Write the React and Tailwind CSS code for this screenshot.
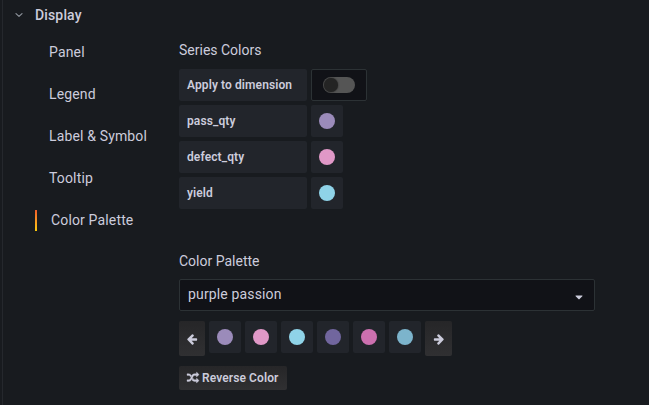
import React from "react";
import { FaCaretDown } from "react-icons/fa";

const navItems = ["Panel", "Legend", "Label & Symbol", "Tooltip", "Color Palette"];

const series = [
  { name: "pass_qty", color: "#9b8bba" },
  { name: "defect_qty", color: "#e098c7" },
  { name: "yield", color: "#8fd3e8" },
];

const palette = ["#9b8bba", "#e098c7", "#8fd3e8", "#71669e", "#cc70af", "#7cb4cc"];

function ArrowIcon({ className }) {
  return (
    <svg viewBox="0 0 1792 1792" fill="currentColor" className={className}>
      <path d="M1664 896v128q0 53-32.5 90.5t-84.5 37.5h-704l293 294q38 36 38 90t-38 90l-75 76q-37 37-90 37-52 0-91-37l-651-652q-37-37-37-90 0-52 37-91l651-650q38-38 91-38 52 0 90 38l75 74q38 38 38 91t-38 91l-293 293h704q52 0 84.5 37.5t32.5 90.5z" />
    </svg>
  );
}

function ShuffleIcon({ className }) {
  return (
    <svg viewBox="0 0 1792 1792" fill="currentColor" stroke="currentColor" strokeWidth="50" className={className}>
      <path d="M666 481q-60 92-137 273-22-45-37-72.5t-40.5-63.5-51-56.5-63-35-81.5-14.5h-224q-14 0-23-9t-9-23v-192q0-14 9-23t23-9h224q250 0 410 225zm1126 799q0 14-9 23l-320 320q-9 9-23 9-13 0-22.5-9.5t-9.5-22.5v-192q-32 0-85 .5t-81 1-73-1-71-5-64-10.5-63-18.5-58-28.5-59-40-55-53.5-56-69.5q59-93 136-273 22 45 37 72.5t40.5 63.5 51 56.5 63 35 81.5 14.5h256v-192q0-14 9-23t23-9q12 0 24 10l319 319q9 9 9 23zm0-896q0 14-9 23l-320 320q-9 9-23 9-13 0-22.5-9.5t-9.5-22.5v-192h-256q-48 0-87 15t-69 45-51 61.5-45 77.5q-32 62-78 171-29 66-49.5 111t-54 105-64 100-74 83-90 68.5-106.5 42-128 16.5h-224q-14 0-23-9t-9-23v-192q0-14 9-23t23-9h224q48 0 87-15t69-45 51-61.5 45-77.5q32-62 78-171 29-66 49.5-111t54-105 64-100 74-83 90-68.5 106.5-42 128-16.5h256v-192q0-14 9-23t23-9q12 0 24 10l319 319q9 9 9 23z" />
    </svg>
  );
}

function Swatch({ color }) {
  return (
    <div className="flex size-8 shrink-0 items-center justify-center rounded-xs bg-[#22252b]">
      <span className="size-4 rounded-full" style={{ backgroundColor: color }} />
    </div>
  );
}

function Label({ children }) {
  return (
    <div className="flex h-8 w-32 items-center rounded-xs bg-[#22252b] px-2 text-xs font-semibold tracking-[0.1px]">
      {children}
    </div>
  );
}

const buttonStyle =
  "flex shrink-0 items-center rounded-xs bg-linear-to-b from-[#262628] to-[#303032]";

export default function App() {
  return (
    <div className="h-[405px] w-[649px] overflow-hidden bg-[#181b1f] pl-0.5 font-['Roboto',sans-serif] text-sm text-[#ccccdc]">
      <div className="h-full border-l border-[#25282d]">
        <header className="flex h-[30px] items-center pl-3 font-medium">
          <svg className="mr-3 size-2" viewBox="0 0 8 8" fill="none" stroke="#8e949c" strokeWidth="1.2" strokeLinecap="round" strokeLinejoin="round">
            <path d="M1 2.6 4 5.4 7 2.6" />
          </svg>
          <h2 className="tracking-[0.15px]">Display</h2>
        </header>
        <div className="flex">
          <nav className="w-44 shrink-0 pt-px pl-8 tracking-[0.15px]">
            {navItems.map((item) => {
              const active = item === "Color Palette";
              return (
                <a key={item} className="flex h-[42px] items-center">
                  <span
                    className={
                      active
                        ? "mr-3.5 h-[21px] w-0.5 bg-linear-to-b from-[#f05a28] to-[#fbca0a]"
                        : "mr-3.5 h-[21px]"
                    }
                  />
                  {item}
                </a>
              );
            })}
          </nav>
          <main className="w-[416px]">
            <h3 className="mt-2.5 mb-[9px] leading-5">Series Colors</h3>
            <div className="flex flex-col gap-1">
              <div className="flex gap-1">
                <Label>Apply to dimension</Label>
                <div className="flex h-8 w-14 items-center justify-center rounded-xs border border-[#2c3235] bg-[#111217]">
                  <div className="flex h-4 w-8 items-center rounded-full bg-[#555555] pl-px">
                    <span className="size-3.5 rounded-full bg-[#242424] shadow-[0_0_2px_#222222]" />
                  </div>
                </div>
              </div>
              {series.map(({ name, color }) => (
                <div key={name} className="flex gap-1">
                  <Label>{name}</Label>
                  <Swatch color={color} />
                </div>
              ))}
            </div>
            <h3 className="mt-[42px] mb-2 leading-5">Color Palette</h3>
            <div className="flex h-8 items-center justify-between rounded-xs border border-[#2c3235] bg-[#111217] pr-[9px] pl-2">
              <span className="pb-0.5 tracking-[0.15px]">purple passion</span>
              <FaCaretDown className="mt-[3px] size-3" />
            </div>
            <div className="mt-2.5 flex items-start gap-1">
              <button className={`${buttonStyle} h-[35px] w-[26px] justify-center`}>
                <ArrowIcon className="size-3" />
              </button>
              {palette.map((color) => (
                <Swatch key={color} color={color} />
              ))}
              <button className={`${buttonStyle} h-[35px] w-[27px] justify-center`}>
                <ArrowIcon className="size-3 -scale-x-100" />
              </button>
            </div>
            <button className={`${buttonStyle} mt-2.5 h-6 w-[108px] gap-[3px] pl-2 text-xs font-semibold tracking-[0.1px]`}>
              <ShuffleIcon className="size-3 overflow-visible" />
              Reverse Color
            </button>
          </main>
        </div>
      </div>
    </div>
  );
}
